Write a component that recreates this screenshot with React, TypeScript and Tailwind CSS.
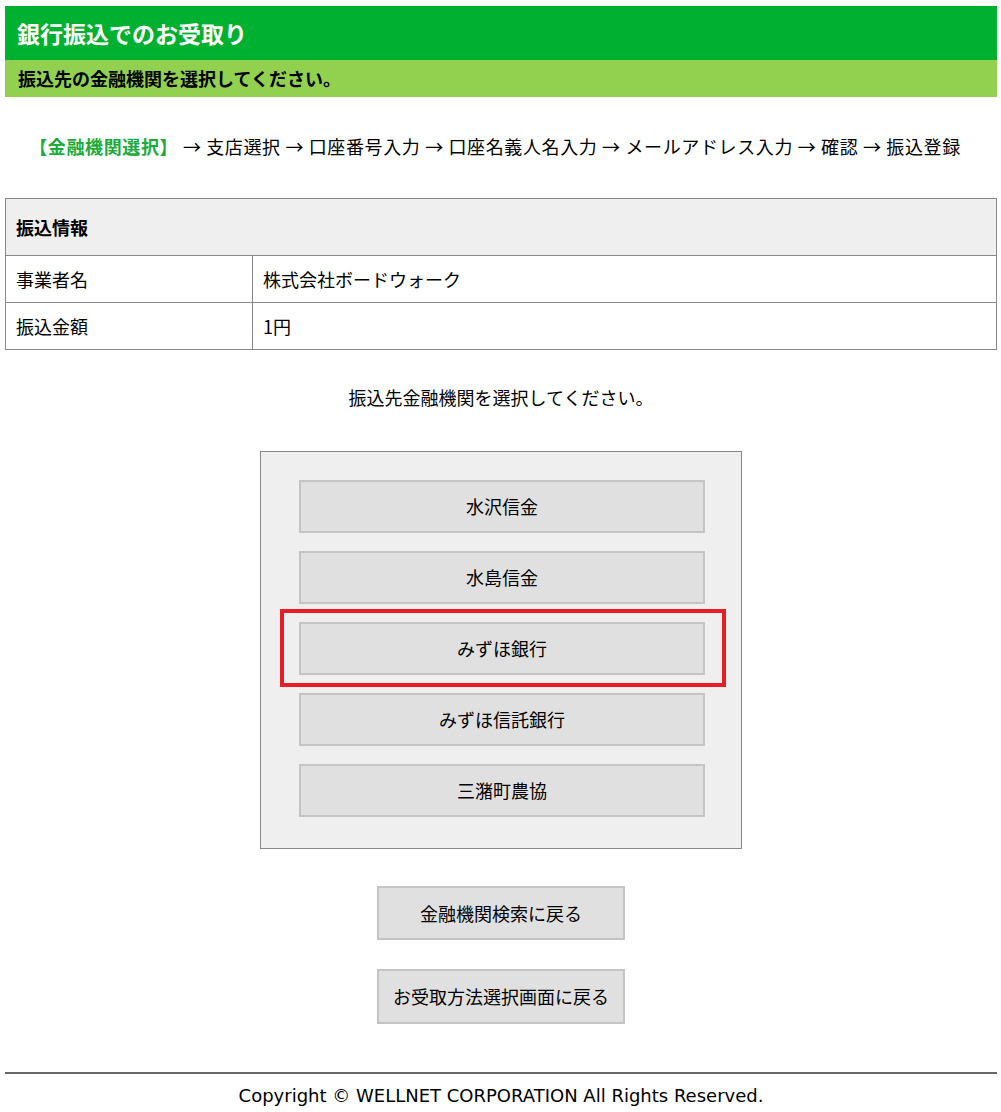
const font = { fontFamily: '"Noto Sans CJK JP", "Noto Sans", sans-serif' };

const banks = ["水沢信金", "水島信金", "みずほ銀行", "みずほ信託銀行", "三潴町農協"];

const btnCls =
  "w-full h-[53px] bg-[#e0e0e0] border-2 border-[#c4c4c4] text-[18px] text-black flex items-center justify-center";

export default function App() {
  return (
    <div className="min-h-[1112px] bg-white pt-[6px] pl-[5px] pr-[4px] text-black" style={font}>
      <div className="bg-[#00b031] h-[54px] flex items-center pl-[12px]">
        <h1 className="text-white font-bold text-[23px]">銀行振込でのお受取り</h1>
      </div>
      <div className="bg-[#92d050] h-[37px] flex items-center pl-[13px]">
        <p className="font-bold text-[18px]">振込先の金融機関を選択してください。</p>
      </div>

      <p className="mt-[36px] pr-[12px] text-center text-[18px] leading-[27px] tracking-[0.035em]">
        <span className="text-[#1aab3c] font-bold">【金融機関選択】</span>
        {" "}→ 支店選択 → 口座番号入力 → 口座名義人名入力 → メールアドレス入力 → 確認 → 振込登録
      </p>

      <table className="mt-[38px] w-full border-collapse border border-[#888] text-[18px]">
        <tbody>
          <tr className="h-[57px] bg-[#efefef]">
            <th colSpan={2} className="border border-[#888] text-left pl-[10px] font-bold">振込情報</th>
          </tr>
          <tr className="h-[47px]">
            <td className="border border-[#888] pl-[10px] w-[247px]">事業者名</td>
            <td className="border border-[#888] pl-[10px]">株式会社ボードウォーク</td>
          </tr>
          <tr className="h-[47px]">
            <td className="border border-[#888] pl-[10px]">振込金額</td>
            <td className="border border-[#888] pl-[10px]">1円</td>
          </tr>
        </tbody>
      </table>

      <p className="mt-[34px] text-center text-[18px] leading-[27px]">振込先金融機関を選択してください。</p>

      <div className="mt-[40px] mx-auto w-[482px] bg-[#efefef] border border-[#888] pt-[28px] pb-[31px] pl-[38px] pr-[36px] flex flex-col gap-[18px]">
        {banks.map((b) => (
          <div key={b} className="relative">
            {b === "みずほ銀行" && (
              <div className="absolute -left-[19px] -right-[21px] -top-[13px] -bottom-[12px] border-[4px] border-[#e81c24]" />
            )}
            <button className={btnCls + " relative"}>{b}</button>
          </div>
        ))}
      </div>

      <div className="mt-[37px] flex flex-col items-center gap-[29px]">
        <button className="w-[248px] h-[54px] bg-[#e0e0e0] border-2 border-[#c4c4c4] text-[18px]">金融機関検索に戻る</button>
        <button className="w-[248px] h-[55px] bg-[#e0e0e0] border-2 border-[#c4c4c4] text-[18px]">お受取方法選択画面に戻る</button>
      </div>

      <hr className="mt-[48px] border-0 h-[2px] bg-[#666]" />
      <p
        className="mt-[9px] text-center text-[18px] leading-[25px]"
        style={{ fontFamily: '"DejaVu Sans", "Noto Sans CJK JP", sans-serif' }}
      >
        Copyright © WELLNET CORPORATION All Rights Reserved.
      </p>
    </div>
  );
}
